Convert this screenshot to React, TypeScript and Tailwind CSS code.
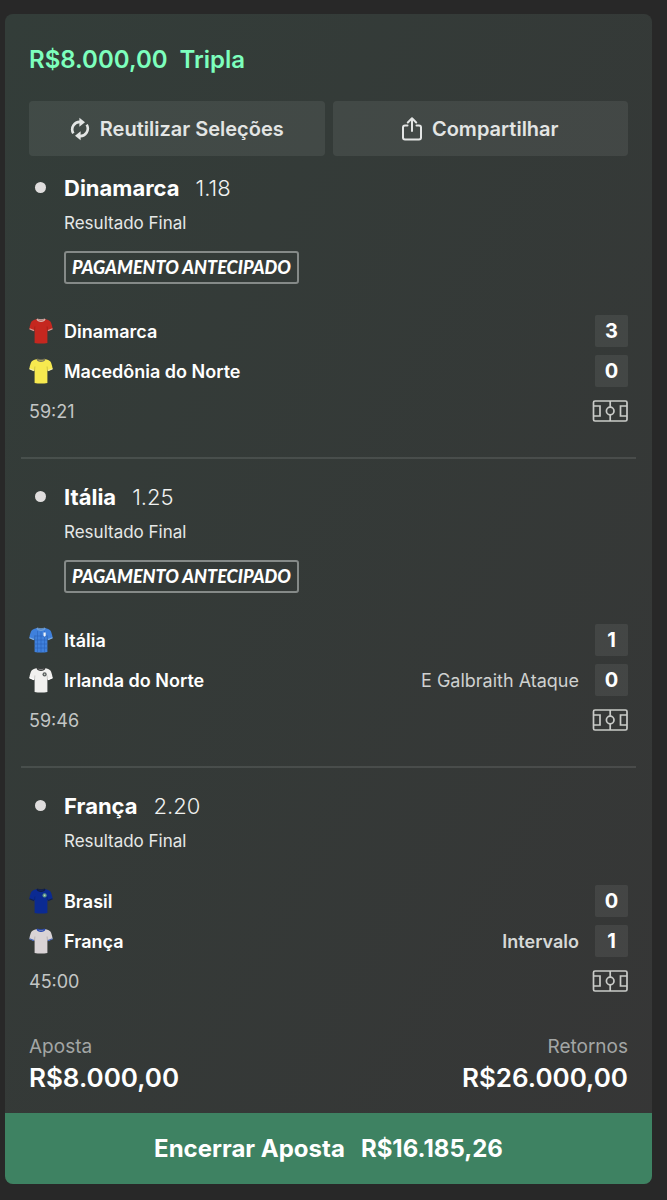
import React from 'react'

interface Team {
  name: string
  score: number
  shirt: ShirtProps
  note?: string
  noteStrong?: boolean
}

interface Selection {
  pick: string
  odds: string
  market: string
  earlyPayout: boolean
  teams: Team[]
  clock: string
}

interface ShirtProps {
  body: string
  trim: string
  cuff: string
  crest?: string
  checked?: boolean
}

const selections: Selection[] = [
  {
    pick: 'Dinamarca',
    odds: '1.18',
    market: 'Resultado Final',
    earlyPayout: true,
    teams: [
      { name: 'Dinamarca', score: 3, shirt: { body: '#c5271f', trim: '#d9b3ad', cuff: '#cf9c96' } },
      { name: 'Macedônia do Norte', score: 0, shirt: { body: '#f7e94f', trim: '#77745a', cuff: '#f3ecaa' } },
    ],
    clock: '59:21',
  },
  {
    pick: 'Itália',
    odds: '1.25',
    market: 'Resultado Final',
    earlyPayout: true,
    teams: [
      { name: 'Itália', score: 1, shirt: { body: '#3f80dc', trim: '#6f9fd8', cuff: '#7fabdf', crest: '#f2f5fa', checked: true } },
      { name: 'Irlanda do Norte', score: 0, shirt: { body: '#f1f1ef', trim: '#3a3c3c', cuff: '#ffffff', crest: '#5b5f60' }, note: 'E Galbraith Ataque' },
    ],
    clock: '59:46',
  },
  {
    pick: 'França',
    odds: '2.20',
    market: 'Resultado Final',
    earlyPayout: false,
    teams: [
      { name: 'Brasil', score: 0, shirt: { body: '#0b2a92', trim: '#101c46', cuff: '#14224c', crest: '#5f9a86' } },
      { name: 'França', score: 1, shirt: { body: '#d9d3d6', trim: '#2748b0', cuff: '#4767bb' }, note: 'Intervalo', noteStrong: true },
    ],
    clock: '45:00',
  },
]

function Shirt({ body, trim, cuff, crest, checked }: ShirtProps) {
  return (
    <svg className="h-[26px] w-6 shrink-0" viewBox="0 0 24 26" fill="none" aria-hidden="true">
      <path
        d="M8 1C5.800 1.600 3.600 2.300 2.600 3.400 1.600 4.800.8 8 .3 11l4.600 1.900.7-.9v13c3.600.8 9.200.8 12.800 0V12l.7.9 4.600-1.900c-.5-3-1.300-6.200-2.300-7.600-1-1.100-3.200-1.800-5.400-2.400-2 1.500-6 1.500-8 0Z"
        fill={body}
      />
      <path d="M5.600 12 5.900 8.500M18.400 12 18.100 8.500" stroke="#000" strokeOpacity=".2" strokeWidth=".8" />
      <path d="M.5 10.800 5 12.600M23.500 10.800 19 12.600" stroke={cuff} strokeWidth="1.200" />
      <path d="M8 1c1.200 3 6.800 3 8 0" stroke={trim} strokeWidth="1.300" />
      <path d="M8.200 1c2 .8 5.600.8 7.600 0" stroke={trim} strokeWidth=".8" />
      {checked && (
        <path d="M8.500 4v21M12 4.500v21M15.500 4v21M5.600 9h12.800M5.600 13h12.800M5.600 17h12.800M5.600 21h12.800" stroke="#2c66bd" strokeWidth=".7" />
      )}
      {crest && (checked ? <path d="M14.500 5.500h2.200v3.200l-1.100 1-1.100-1Z" fill={crest} /> : (
        <>
          <circle cx="15.600" cy="7.400" r="2.100" fill={crest} />
          <circle cx="15.600" cy="7.400" r=".8" fill="#c9d3c4" />
        </>
      ))}
    </svg>
  )
}

function ReuseIcon() {
  return (
    <svg className="h-6 w-5" viewBox="0 0 20 24" aria-hidden="true">
      <path d="M3.300 16.300A7.600 7.600 0 0 1 10.800 4.900" fill="none" stroke="currentColor" strokeWidth="2.600" />
      <path d="M9.400.8 15 5.300 9.400 9.700Z" fill="currentColor" />
      <path d="M16.700 7.700A7.600 7.600 0 0 1 9.200 19.100" fill="none" stroke="currentColor" strokeWidth="2.600" />
      <path d="M10.600 23.200 5 18.700l5.600-4.400Z" fill="currentColor" />
    </svg>
  )
}

function ShareIcon() {
  return (
    <svg className="h-6 w-5" viewBox="0 0 20 24" fill="none" stroke="currentColor" strokeWidth="2" strokeLinecap="round" strokeLinejoin="round" aria-hidden="true">
      <path d="M5.500 8.500H3A2 2 0 0 0 1 10.500v10a2 2 0 0 0 2 2h14a2 2 0 0 0 2-2v-10a2 2 0 0 0-2-2h-2.500" />
      <path d="M10 14V1.500M5.800 5.500 10 1.300l4.200 4.200" />
    </svg>
  )
}

function PitchIcon() {
  return (
    <svg className="h-[22px] w-9" viewBox="0 0 36 22" fill="none" stroke="#c9cbc8" strokeWidth="1.700" aria-hidden="true">
      <rect x="1.500" y="1" width="33.500" height="20" rx="1.500" />
      <path d="M18.200 1v6.200M18.200 14.800V21M1.500 6H8v10H1.500M35 6h-6.500v10H35" />
      <circle cx="18.200" cy="11" r="3.800" />
    </svg>
  )
}

function TeamRow({ team }: { team: Team }) {
  return (
    <li className="flex h-10 items-center">
      <Shirt {...team.shirt} />
      <span className="ml-[11px] text-[18px] font-semibold text-white">{team.name}</span>
      {team.note && (
        <span className={`ml-auto text-[18px] ${team.noteStrong ? 'font-semibold text-[#d6d8d7]' : 'text-[#cfd1d0]'}`}>
          {team.note}
        </span>
      )}
      <span className={`flex h-8 w-[33px] items-center justify-center rounded-xs bg-white/7 text-[20px] font-bold text-white ${team.note ? 'ml-4' : 'ml-auto'}`}>
        {team.score}
      </span>
    </li>
  )
}

function SelectionBlock({ selection }: { selection: Selection }) {
  return (
    <section className="-mx-2 border-t-2 border-white/10 px-2 pt-[18px] pb-[26px] first:border-t-0 first:pt-3">
      <div className="relative pl-[35px]">
        <span className="absolute top-3.5 left-1.5 size-[11px] rounded-full bg-[#dfdddd]" />
        <h2 className="flex gap-4 text-[22px] leading-10 font-bold text-white">
          {selection.pick}
          <span className="font-light text-[#f0f1f0]">{selection.odds}</span>
        </h2>
        <p className="text-[17px] leading-[30px] text-[#e6e8e7]">{selection.market}</p>
        {selection.earlyPayout && (
          <span className="mt-[13px] mb-0.5 flex h-[33px] w-fit items-center rounded-[3px] border-2 border-[#858a88] px-1.5 font-['Lato'] text-[18px] font-black text-white italic">
            PAGAMENTO ANTECIPADO
          </span>
        )}
      </div>
      <ul className="pt-[25px]">
        {selection.teams.map((team) => (
          <TeamRow key={team.name} team={team} />
        ))}
      </ul>
      <div className="flex h-10 items-center justify-between text-[18px] text-[#c3c6c5]">
        <time>{selection.clock}</time>
        <PitchIcon />
      </div>
    </section>
  )
}

function App(): React.ReactElement {
  return (
    <div className="min-h-screen bg-[#282828] pt-3.5 pr-[15px] pb-4 pl-[5px] font-['Inter',sans-serif]">
      <main className="overflow-hidden rounded-lg bg-linear-120 from-[#333d39] to-[#363636]">
        <div className="px-6 pt-[26px]">
          <h1 className="flex gap-3 text-[24px] leading-10 font-semibold text-[#7dffbd]">
            <span>R$8.000,00</span>
            <span>Tripla</span>
          </h1>

          <div className="mt-[21px] grid grid-cols-2 gap-2">
            <button type="button" className="flex h-[55px] items-center justify-center gap-2.5 rounded-sm bg-white/7 text-[20px] font-semibold text-[#e3e5e4]">
              <ReuseIcon />
              Reutilizar Seleções
            </button>
            <button type="button" className="flex h-[55px] items-center justify-center gap-2.5 rounded-sm bg-white/7 text-[20px] font-semibold text-[#e3e5e4]">
              <ShareIcon />
              Compartilhar
            </button>
          </div>

          <div>
            {selections.map((selection) => (
              <SelectionBlock key={selection.pick} selection={selection} />
            ))}
          </div>

          <dl className="flex justify-between pt-2 pb-4">
            <div>
              <dt className="text-[19px] leading-6 text-[#a3a6a5]">Aposta</dt>
              <dd className="text-[26px] leading-[38px] font-semibold text-white">R$8.000,00</dd>
            </div>
            <div className="text-right">
              <dt className="text-[19px] leading-6 text-[#a3a6a5]">Retornos</dt>
              <dd className="text-[26px] leading-[38px] font-semibold text-white">R$26.000,00</dd>
            </div>
          </dl>
        </div>

        <button type="button" className="flex h-[71px] w-full items-center justify-center gap-4 bg-[#3e8262] text-[24px] font-bold text-white">
          <span>Encerrar Aposta</span>
          <span>R$16.185,26</span>
        </button>
      </main>
    </div>
  )
}

export default App
